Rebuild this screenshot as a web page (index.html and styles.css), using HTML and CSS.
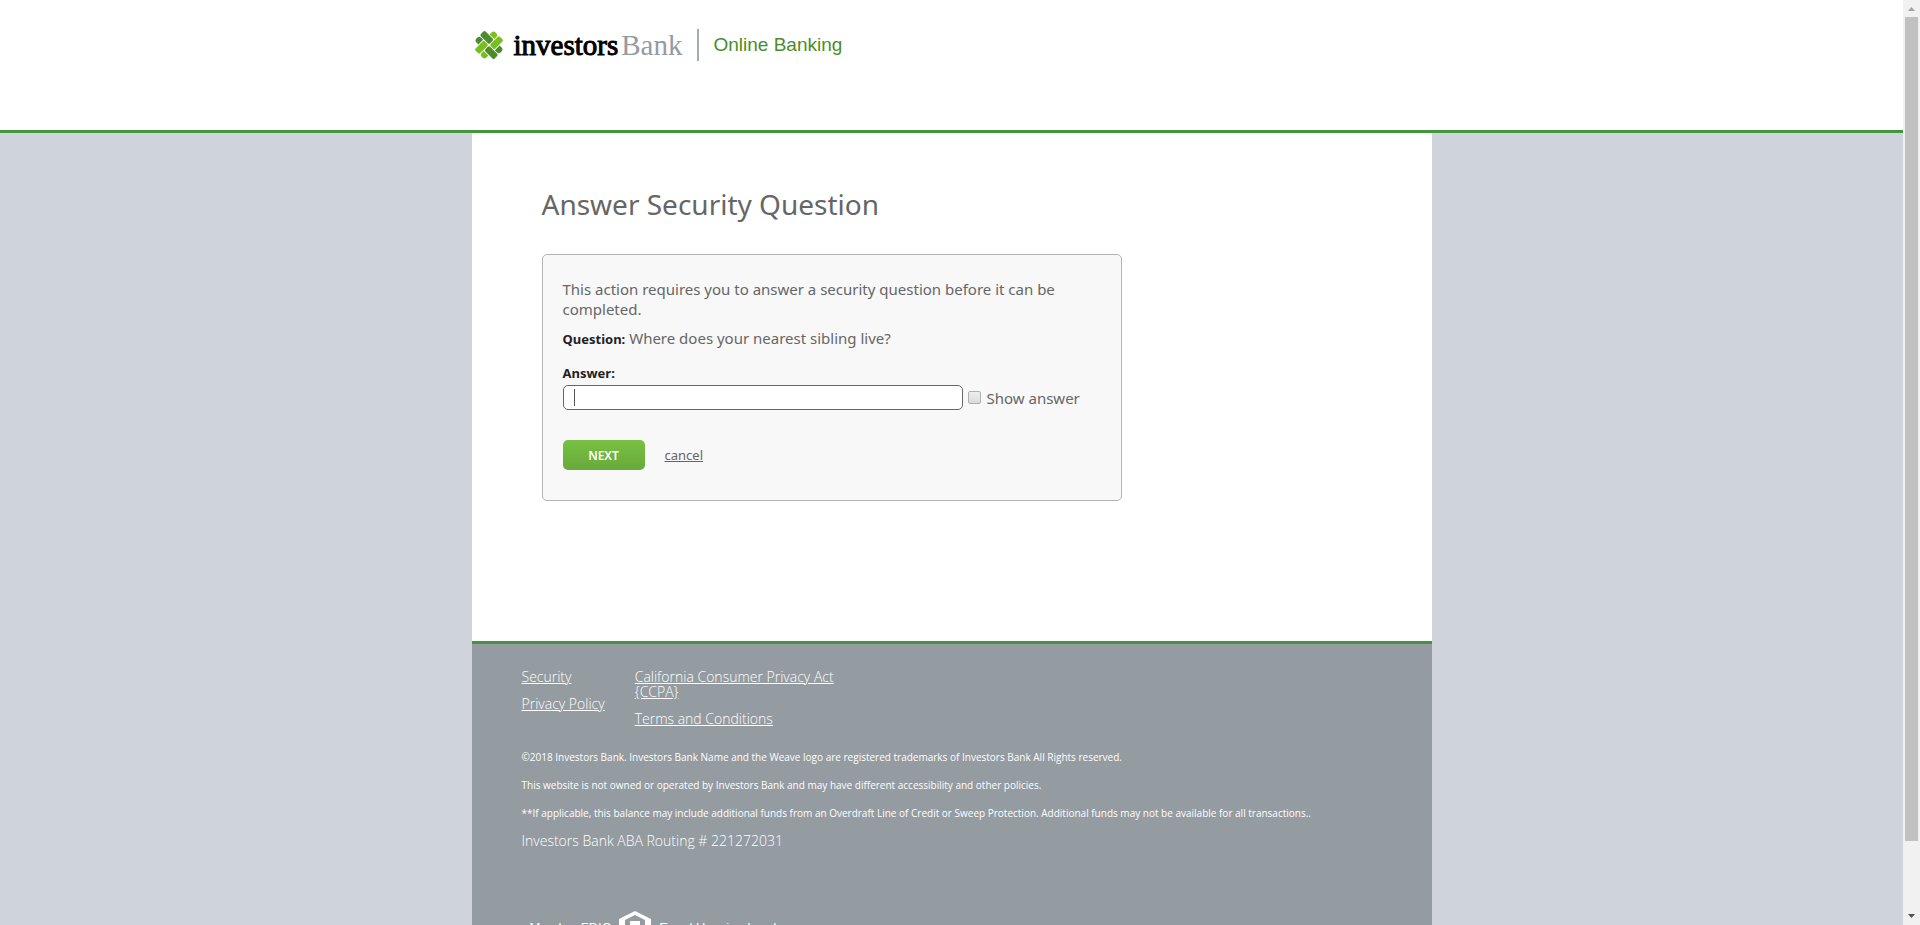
FILE: index.html
```html
<!DOCTYPE html>
<html lang="en">
<head>
<meta charset="utf-8">
<title>Investors Bank Online Banking</title>
<link rel="stylesheet" href="styles.css">
</head>
<body>
<div class="page">
  <header class="header">
    <div class="brand">
      <svg class="mark" viewBox="-14 -14 28 28" aria-hidden="true">
        <g transform="rotate(45)">
          <g fill="#78be20">
            <rect x="-6.600" y="0.400" width="6.200" height="12.200" rx="1.500"/>
            <rect x="0.400" y="-12.600" width="6.200" height="12.200" rx="1.500"/>
            <path d="M-6.600 -7.400V-10a2.600 2.600 0 0 1 2.600-2.600h1a2.600 2.600 0 0 1 2.600 2.600v2.600z"/>
            <path d="M6.600 7.400V10a2.600 2.600 0 0 1-2.600 2.600h-1A2.600 2.600 0 0 1 .4 10V7.400z"/>
          </g>
          <g fill="#4c8c2b">
            <rect x="-12.600" y="-6.600" width="12.200" height="6.200" rx="1.500"/>
            <rect x="0.400" y="0.400" width="12.200" height="6.200" rx="1.500"/>
            <path d="M-7.400 .4H-10A2.600 2.600 0 0 0-12.600 3v1A2.600 2.600 0 0 0-10 6.600h2.600z"/>
            <path d="M7.400-.4H10A2.600 2.600 0 0 0 12.600-3v-1A2.600 2.600 0 0 0 10-6.600H7.400z"/>
          </g>
        </g>
      </svg>
      <span class="wordmark">investors<span class="wordmark-light">Bank</span></span>
      <span class="tagline">Online Banking</span>
    </div>
  </header>
  <main class="main">
    <h1 class="title">Answer Security Question</h1>
    <form class="panel">
      <p class="text">This action requires you to answer a security question before it can be completed.</p>
      <p class="text question"><strong class="label">Question:</strong> Where does your nearest sibling live?</p>
      <label class="label answer-label" for="answer">Answer:</label>
      <div class="answer-row">
        <input class="answer" id="answer" type="text">
        <input class="check" id="show" type="checkbox">
        <label class="text" for="show">Show answer</label>
      </div>
      <div class="actions">
        <button class="next" type="button">NEXT</button>
        <a class="cancel" href="#">cancel</a>
      </div>
    </form>
  </main>
  <footer class="footer">
    <nav class="links">
      <ul class="col"><li><a href="#">Security</a></li><li><a href="#">Privacy Policy</a></li></ul>
      <ul class="col"><li><a href="#">California Consumer Privacy Act {CCPA}</a></li><li><a href="#">Terms and Conditions</a></li></ul>
    </nav>
    <p class="legal">©2018 Investors Bank. Investors Bank Name and the Weave logo are registered trademarks of Investors Bank All Rights reserved.</p>
    <p class="legal">This website is not owned or operated by Investors Bank and may have different accessibility and other policies.</p>
    <p class="legal">**If applicable, this balance may include additional funds from an Overdraft Line of Credit or Sweep Protection. Additional funds may not be available for all transactions..</p>
    <p class="routing">Investors Bank ABA Routing # 221272031</p>
    <div class="member">
      <span>Member FDIC</span>
      <svg class="house" viewBox="0 0 32 32" aria-hidden="true"><path fill="#fff" fill-rule="evenodd" d="M16 0 32 8v8h-3v14H3V16H0V8zM16 4 6 9v16h20V9zM11 10h10v4H11zM11 17h10v4H11z"/></svg>
      <span>Equal Housing Lender</span>
    </div>
  </footer>
</div>
<div class="scrollbar" aria-hidden="true">
  <svg class="arrow" viewBox="0 0 17 17"><path fill="#a3a3a3" d="M5 11h7L8.500 7z"/></svg>
  <div class="thumb"></div>
  <svg class="arrow" viewBox="0 0 17 17"><path fill="#505050" d="M5 6h7L8.500 10z"/></svg>
</div>
</body>
</html>
```
FILE: styles.css
```css
* { box-sizing: border-box; }
body {
  margin: 0;
  height: 100vh;
  overflow: hidden;
  display: grid;
  grid-template-columns: minmax(0, 1fr) 17px;
  font-family: "Noto Sans", "Open Sans", sans-serif;
  font-size: 14px;
  color: #666;
}
p, h1, ul { margin: 0; padding: 0; }
.page {
  height: 100vh;
  overflow: hidden;
  background: #ced3dc;
}
.header {
  height: 133px;
  background: #fff;
  border-bottom: 3px solid #43953e;
}
.brand, .main, .footer {
  max-width: 960px;
  margin: 0 auto;
}
.brand {
  display: flex;
  align-items: center;
  padding: 29px 2px 0;
}
.mark { width: 30px; height: 30px; }
.wordmark {
  margin-left: 10px;
  font: 29px/32px "Liberation Serif", serif;
  color: #000;
  -webkit-text-stroke: 1px #000;
}
.wordmark-light {
  margin-left: 3px;
  color: #949ba2;
  -webkit-text-stroke: 0;
}
.tagline {
  margin-left: 15px;
  padding-left: 14px;
  border-left: 2px solid #a5abb1;
  font: 19px/32px "Liberation Sans", sans-serif;
  color: #4c8c2b;
}
.main {
  min-height: 508px;
  padding: 51px 70px 0;
  background: #fff;
}
.title {
  font-size: 28px;
  line-height: 40px;
  font-weight: 400;
}
.panel {
  max-width: 580px;
  margin-top: 30px;
  padding: 24px 20px 30px;
  border: 1px solid #b3b3b3;
  border-radius: 5px;
  background: #f8f8f8;
}
.text { font-size: 15px; line-height: 20px; }
.question { margin-top: 9px; }
.label {
  font-size: 13px;
  font-weight: 700;
  color: #222;
}
.question .label { line-height: 1; }
.answer-label {
  display: block;
  margin-top: 16px;
  line-height: 18px;
}
.answer-row {
  display: flex;
  align-items: center;
  margin-top: 3px;
}
.answer {
  width: 400px;
  height: 25px;
  padding: 2px 10px;
  border: 1px solid #666;
  border-radius: 5px;
  background: linear-gradient(#555, #555) 10px center / 1px 17px no-repeat #fff;
  outline: 0;
  font: inherit;
  color: #666;
}
.answer:focus { background-image: none; }
.check {
  appearance: none;
  width: 13px;
  height: 13px;
  margin: 0 6px 0 5px;
  border: 1px solid #b0b0b0;
  border-radius: 2px;
  background: linear-gradient(#eee, #dcdcdc);
}
.actions {
  display: flex;
  align-items: center;
  gap: 20px;
  margin-top: 30px;
}
.next {
  width: 82px;
  height: 30px;
  border: 0;
  border-radius: 5px;
  background: linear-gradient(#78c143, #69a93a);
  color: #fff;
  font: 600 12px "Noto Sans", sans-serif;
}
.cancel { color: #666; font-size: 13px; }
.footer {
  min-height: 400px;
  padding: 25px 50px;
  border-top: 3px solid #43953e;
  background: #949ba1;
  color: #fff;
  font-family: "Open Sans", "Noto Sans", sans-serif;
}
.links { display: flex; gap: 30px; line-height: 15px; font-size: 14px; font-weight: 300; }
.links a { color: #fff; }
.col { list-style: none; max-width: 210px; }
.col li { margin-bottom: 12px; }
.legal { margin-top: 12px; font-size: 10px; line-height: 16px; }
.links + .legal { margin-top: 11px; }
.routing { margin-top: 10px; font-size: 14px; font-weight: 300; line-height: 20px; }
.member {
  display: flex;
  align-items: center;
  gap: 8px;
  margin-top: 60px;
  padding-left: 8px;
  font-family: "Liberation Sans", sans-serif;
  font-size: 13px;
}
.house { width: 32px; height: 32px; }
.scrollbar {
  display: grid;
  grid-template-rows: 17px minmax(0, 1fr) 17px;
  height: 100vh;
  background: #f1f1f1;
}
.arrow { width: 17px; height: 17px; }
.thumb { margin: 0 2px; height: 92.500%; background: #c1c1c1; }
```
